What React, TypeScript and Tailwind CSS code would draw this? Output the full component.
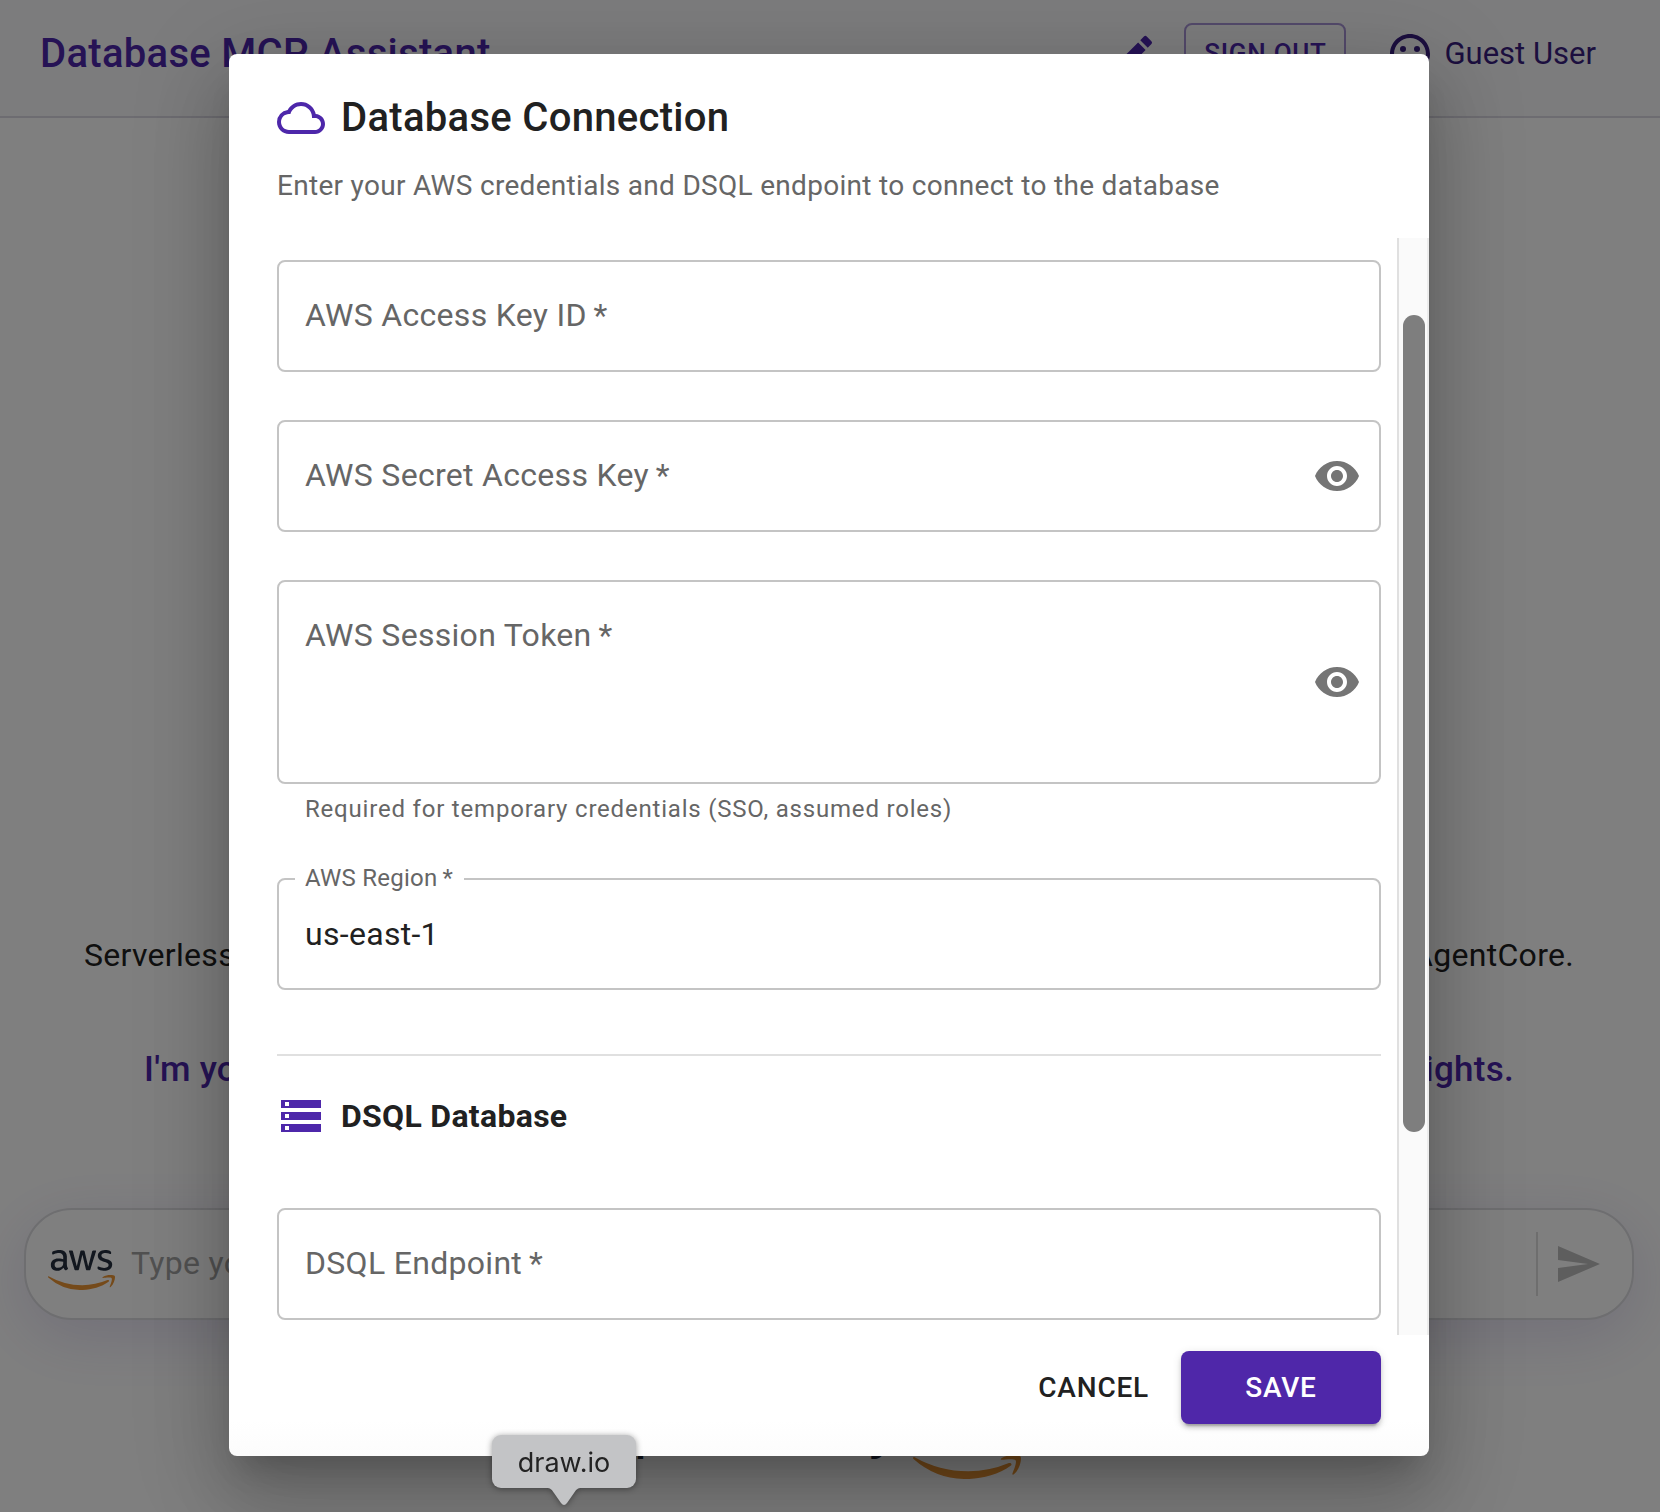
import type { ReactNode } from "react";
import {
  MdCloudQueue,
  MdEdit,
  MdSend,
  MdSentimentSatisfied,
  MdStorage,
  MdVisibility,
} from "react-icons/md";
import { FaAws } from "react-icons/fa";

function AwsLogo({ className }: { className: string }) {
  return (
    <FaAws
      className={className}
      fill="url(#aws-colors)"
      viewBox="0 64 640 384"
      preserveAspectRatio="none"
    />
  );
}

function Header() {
  return (
    <header className="flex h-[118px] items-center border-b-2 border-[#dad9e3] bg-[#f8f8fb] pb-2 pl-10 pr-16">
      <h1 className="whitespace-nowrap text-[40px] font-medium tracking-[0.0075em] text-[#4d27aa]">
        Database MCP Assistant
      </h1>
      <MdEdit className="ml-auto size-12 text-[#4d27aa]" />
      <button className="ml-[26px] h-[62px] w-[162px] whitespace-nowrap rounded-lg border-2 border-[#a693d4] pb-0.5 text-[26px] font-medium leading-none tracking-[0.02857em] text-[#4d27aa]">
        SIGN OUT
      </button>
      <div className="ml-10 flex items-center gap-[10px] text-[#391e7e]">
        <MdSentimentSatisfied className="size-12" />
        <span className="whitespace-nowrap text-[31px] leading-[48px]">Guest User</span>
      </div>
    </header>
  );
}

function ChatPage() {
  return (
    <div className="flex h-[1512px] w-[1660px] flex-col bg-white">
      <Header />
      <main className="flex flex-1 flex-col pt-[813px]">
        <p className="ml-[84px] flex h-12 w-[1490px] items-center justify-between text-[32px] tracking-[0.00938em] text-[#212121]">
          <span>Serverless</span>
          <span>AgentCore.</span>
        </p>
        <p className="ml-36 mt-[67px] flex h-12 w-[1370px] items-center justify-between text-[35px] font-medium tracking-[0.0075em] text-[#4d27aa]">
          <span>I'm your</span>
          <span>insights.</span>
        </p>
        <div className="mx-6 mt-[114px] flex h-28 w-[1610px] items-center rounded-[48px] border-2 border-[#dcdce0] bg-white pl-[22px] pr-[30px] shadow-[0_16px_64px_rgba(69,39,160,0.15)]">
          <AwsLogo className="mt-3 h-10 w-[67px]" />
          <span className="-mt-0.5 ml-4 flex-1 text-[32px] tracking-[0.00938em] text-[#a3a3a3]">
            Type your
          </span>
          <div className="h-16 w-0.5 bg-[#dcdcdc]" />
          <MdSend className="ml-4 size-12 text-[#bdbdbd]" />
        </div>
        <div className="ml-[634px] mt-[87px] flex h-[72px] w-[387px] items-start justify-between">
          <span className="whitespace-nowrap font-['Open_Sans'] text-[46px] font-semibold leading-none text-[#232f3e]">
            powered by
          </span>
          <AwsLogo className="mt-2 h-16 w-[108px] shrink-0" />
        </div>
      </main>
    </div>
  );
}

type FieldProps = {
  label: string;
  value?: string;
  tall?: boolean;
  adornment?: ReactNode;
};

function Field({ label, value, tall, adornment }: FieldProps) {
  const requiredLabel = `${label}\u2009*`;
  return (
    <div
      className={`relative flex w-[1104px] shrink-0 justify-between rounded-lg border-2 border-[#c4c4c4] pl-[26px] pr-[18px] ${
        tall ? "h-[204px]" : "h-28"
      }`}
    >
      {value ? (
        <>
          <span className="absolute -top-5 left-4 flex h-9 w-[169px] items-center whitespace-nowrap bg-white pl-[10px] text-[24px] tracking-[0.00938em] text-[#666]">
            {requiredLabel}
          </span>
          <span className="flex h-[108px] items-center text-[32px] tracking-[0.00938em] text-[#212121]">
            {value}
          </span>
        </>
      ) : (
        <span className="flex h-[106px] items-center text-[32px] tracking-[0.00938em] text-[#666]">
          {requiredLabel}
        </span>
      )}
      {adornment && <span className="flex items-center">{adornment}</span>}
    </div>
  );
}

function ConnectionDialog() {
  return (
    <section className="flex h-[1402px] w-[1200px] flex-col rounded-lg bg-white bg-[linear-gradient(to_top,#fcfcfc,#ffffff_36px)] shadow-[0_22px_30px_-14px_rgba(0,0,0,0.2),0_48px_76px_6px_rgba(0,0,0,0.14),0_18px_92px_16px_rgba(0,0,0,0.12)]">
      <div className="h-[184px] shrink-0 px-12 pt-8">
        <h2 className="flex h-16 items-center gap-4 text-[40px] font-medium tracking-[0.0075em] text-[#212121]">
          <MdCloudQueue className="size-12 text-[#4d27aa]" />
          Database Connection
        </h2>
        <p className="mt-4 text-[28px] leading-10 tracking-[0.01071em] text-[#666]">
          Enter your AWS credentials and DSQL endpoint to connect to the database
        </p>
      </div>

      <div className="flex h-[1097px] shrink-0">
        <div className="flex w-[1168px] flex-col overflow-hidden pl-12 pt-[22px]">
          <Field label="AWS Access Key ID" />
          <div className="h-12 shrink-0" />
          <Field
            label="AWS Secret Access Key"
            adornment={<MdVisibility className="size-12 text-[#757575]" />}
          />
          <div className="h-12 shrink-0" />
          <Field
            label="AWS Session Token"
            tall
            adornment={<MdVisibility className="size-12 text-[#757575]" />}
          />
          <p className="mb-[49px] ml-7 mt-[5px] h-10 shrink-0 text-[24px] leading-10 tracking-[0.03333em] text-[#666]">
            Required for temporary credentials (SSO, assumed roles)
          </p>
          <Field label="AWS Region" value="us-east-1" />
          <hr className="mt-16 w-[1104px] border-t-2 border-[#e0e0e0]" />
          <h3 className="mb-[68px] mt-9 flex h-12 shrink-0 items-center gap-4 text-[32px] font-bold tracking-[0.00938em] text-[#212121]">
            <MdStorage className="size-12 text-[#4d27aa]" />
            DSQL Database
          </h3>
          <Field label="DSQL Endpoint" />
        </div>
        <div className="w-8 border-l-2 border-r-2 border-l-[#e0e0e0] border-r-[#ececec] bg-[#fafafa] pl-1 pt-[77px]">
          <div className="h-[817px] w-[22px] rounded-full bg-[#7e7e7e]" />
        </div>
      </div>

      <div className="flex flex-1 justify-end pr-12 pt-4">
        <button className="mr-8 h-[73px] text-[28px] font-medium tracking-[0.02857em] text-[#212121]">
          CANCEL
        </button>
        <button className="h-[73px] w-[200px] rounded-lg bg-[#4f27a9] text-[28px] font-medium tracking-[0.02857em] text-white shadow-[0_6px_2px_-4px_rgba(0,0,0,0.2),0_4px_4px_rgba(0,0,0,0.14),0_2px_10px_rgba(0,0,0,0.12)]">
          SAVE
        </button>
      </div>
    </section>
  );
}

function DockTooltip() {
  return (
    <div className="absolute left-[492px] top-[1435px] flex w-36 flex-col items-center drop-shadow-[0_1px_3px_rgba(0,0,0,0.4)]">
      <div className="flex h-[53px] w-36 items-center justify-center rounded-[9px] bg-[#c3c4c6] pt-1 font-['Inter'] text-[27px] text-[#232323]">
        draw.io
      </div>
      <svg className="-mt-px h-[18px] w-9" viewBox="0 0 36 18" fill="#c3c4c6">
        <path d="M0 0h36v1c-5 0-6 2-8 5l-7 10c-2 2.500-4 2.500-6 0L8 6C6 3 5 1 0 1z" />
      </svg>
    </div>
  );
}

export default function App() {
  return (
    <div className="relative h-[1512px] w-[1660px] overflow-hidden font-['Roboto',sans-serif]">
      <svg className="absolute size-0" aria-hidden="true">
        <defs>
          <linearGradient id="aws-colors" x1="0" y1="0" x2="0" y2="1">
            <stop offset="0.58" stopColor="#252f3e" />
            <stop offset="0.58" stopColor="#ea9535" />
          </linearGradient>
        </defs>
      </svg>
      <ChatPage />
      <div className="absolute inset-0 flex justify-center bg-black/50 pr-0.5 pt-[54px]">
        <ConnectionDialog />
      </div>
      <DockTooltip />
    </div>
  );
}
